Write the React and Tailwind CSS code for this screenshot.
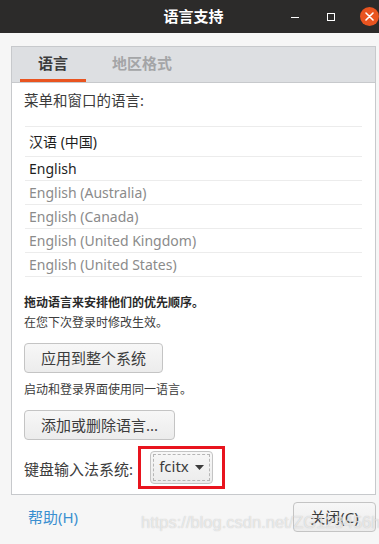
export default function App() {
  const languages = [
    { name: "汉语 (中国)", tone: "text-[#1e1e1e]", tall: true },
    { name: "English", tone: "text-[#1e1e1e]" },
    { name: "English (Australia)", tone: "text-[#8b8b8b]" },
    { name: "English (Canada)", tone: "text-[#8b8b8b]" },
    { name: "English (United Kingdom)", tone: "text-[#8b8b8b]" },
    { name: "English (United States)", tone: "text-[#8b8b8b]" },
  ];

  return (
    <div
      className="relative w-[379px] h-[544px] overflow-hidden bg-[#f6f6f6] text-[#3c3c3c]"
      style={{ fontFamily: '"Noto Sans", "Noto Sans CJK SC", sans-serif' }}
    >
      {/* title bar */}
      <div className="h-[33px] bg-[#2c2b2a] flex items-center relative">
        <div className="flex-1 text-center text-white text-[15px] font-bold leading-none pl-[8px]">
          语言支持
        </div>
        <div className="absolute right-0 top-0 h-[33px] flex items-center">
          <span className="w-[8px] h-[1px] bg-white mr-[28px] mt-[2px]" />
          <span className="w-[8px] h-[8px] border border-white mr-[25px]" />
          <span className="w-[19px] h-[19px] rounded-full bg-[#e95420] flex items-center justify-center">
            <svg width="9" height="9" viewBox="0 0 9 9">
              <path d="M1 1L8 8M8 1L1 8" stroke="white" strokeWidth="1.6" strokeLinecap="round" />
            </svg>
          </span>
        </div>
      </div>

      {/* notebook */}
      <div className="ml-[11px] mr-[3px] mt-[13px] border border-[#c7c9cc] bg-white">
        <div className="h-[36px] bg-[#dddfe2] border-b border-[#c7c9cc] flex items-end pl-[8px]">
          <div className="w-[66px] h-full flex flex-col">
            <div className="flex-1 flex items-center justify-center text-[15px] font-bold text-[#3c3c3c]">
              语言
            </div>
            <div className="h-[3px] bg-[#e95420]" />
          </div>
          <div className="h-full flex items-center pl-[26px] text-[15px] font-bold text-[#a4a5a7] pb-[3px]">
            地区格式
          </div>
        </div>

        <div className="px-[12px] pt-[7px] pb-[5px]">
          <div className="text-[14.5px] leading-[20px] text-[#3c3c3c]">菜单和窗口的语言:</div>
          <div className="mt-[16px] mx-[1px] border-t border-[#ececec]">
            {languages.map((l) => (
              <div
                key={l.name}
                className={`${l.tall ? "h-[30px]" : "h-[24px]"} border-b border-[#ececec] flex items-center pl-[4px] text-[14px] ${l.tone}`}
              >
                {l.name}
              </div>
            ))}
          </div>

          <div className="mt-[16px] text-[12px] leading-[20px] font-bold text-[#2a2a2a]">
            拖动语言来安排他们的优先顺序。
          </div>
          <div className="text-[12px] leading-[20px] text-[#3c3c3c]">在您下次登录时修改生效。</div>

          <button className="mt-[10px] w-[139px] h-[30px] rounded-[4px] border border-[#c4c4c4] bg-gradient-to-b from-[#f7f7f7] to-[#ececec] text-[15px] text-[#3c3c3c] flex items-center justify-center">
            应用到整个系统
          </button>

          <div className="mt-[7px] text-[12px] leading-[20px] text-[#3c3c3c]">启动和登录界面使用同一语言。</div>

          <button className="mt-[10px] w-[151px] h-[30px] rounded-[4px] border border-[#c4c4c4] bg-gradient-to-b from-[#f7f7f7] to-[#ececec] text-[15px] text-[#3c3c3c] flex items-center justify-center">
            添加或删除语言...
          </button>

          <div className="mt-[6px] flex items-center">
            <span className="text-[15px] text-[#3c3c3c] w-[114px] mt-[3px]">键盘输入法系统:</span>
            <div className="border-[3px] border-[#e8141e] px-[9px] py-[2px] w-[87px]">
              <div className="h-[33px] w-[63px] rounded-[4px] border border-[#c4c4c4] bg-gradient-to-b from-[#f7f7f7] to-[#ececec] p-[2px]">
                <div className="h-full border border-dashed border-[#b6b6b6] flex items-center justify-center gap-[6px] text-[15px] text-[#3c3c3c]">
                  <span className="leading-none mb-[2px]">fcitx</span>
                  <svg width="9" height="5" viewBox="0 0 9 5">
                    <path d="M0 0H9L4.5 5Z" fill="#3c3c3c" />
                  </svg>
                </div>
              </div>
            </div>
          </div>
        </div>
      </div>

      {/* bottom buttons */}
      <div className="mt-[7px] ml-[28px] mr-[3px] flex items-center justify-between">
        <span className="text-[15px] text-[#3a8fd0]">帮助(H)</span>
        <button className="w-[83px] h-[30px] rounded-[4px] border border-[#c4c4c4] bg-gradient-to-b from-[#f7f7f7] to-[#ececec] text-[15px] text-[#3c3c3c] flex items-center justify-center">
          关闭(C)
        </button>
      </div>

      {/* watermark */}
      <div
        className="absolute left-[141px] top-[510px] text-[16.5px] text-white/60 pointer-events-none whitespace-nowrap"
        style={{ fontFamily: '"Liberation Sans", sans-serif', textShadow: "0 0 1px rgba(150,150,150,0.6)" }}
      >
        https://blog.csdn.net/ZG123456h
      </div>
    </div>
  );
}
